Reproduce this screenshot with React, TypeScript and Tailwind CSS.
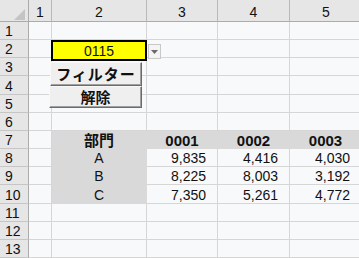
import React from "react";

type Cell = { text?: string; gray?: boolean; bold?: boolean; right?: boolean };

const data = [
  ["9,835", "4,416", "4,030"],
  ["8,225", "8,003", "3,192"],
  ["7,350", "5,261", "4,772"],
];

function cellAt(r: number, c: number): Cell {
  if (r === 7 && c >= 2) {
    return { text: ["部門", "0001", "0002", "0003"][c - 2], gray: true, bold: true };
  }
  if (r >= 8 && r <= 10) {
    if (c === 2) return { text: ["A", "B", "C"][r - 8], gray: true };
    if (c >= 3) return { text: data[r - 8][c - 3], right: true };
  }
  return {};
}

const rows = [1, 2, 3, 4, 5, 6, 7, 8, 9, 10, 11, 12, 13];
const cols = [1, 2, 3, 4, 5];

function GridCell({ r, c }: { r: number; c: number }) {
  const cell = cellAt(r, c);
  return (
    <div
      className={clsx(
        "flex items-center text-[14px] leading-none pt-[1px] border-r border-b",
        cell.gray ? "bg-[#d9d9d9] border-[#d9d9d9]" : "border-[#d6d6d6]",
        cell.right ? "justify-end pr-[11px]" : "justify-center",
        cell.bold && "font-bold text-[15px]"
      )}
    >
      {cell.text}
    </div>
  );
}

function clsx(...a: (string | false | undefined)[]) {
  return a.filter(Boolean).join(" ");
}

function Button({ label, extra }: { label: string; extra: string }) {
  return (
    <div
      className={clsx(
        "absolute flex items-center justify-center bg-[#efefef] border border-[#f8f8f8] border-r-[#6b6b6b] border-b-[#6b6b6b] text-[15px] font-bold font-['Noto_Sans_CJK_JP',sans-serif] shadow-[inset_-1px_-1px_0_#a0a0a0]",
        extra
      )}
    >
      {label}
    </div>
  );
}

export default function App() {
  return (
    <div className="relative w-[359px] h-[258px] overflow-hidden bg-[#f8f9fb] text-[#111] font-['Liberation_Sans','Noto_Sans_CJK_JP',sans-serif]">
      <div className="grid w-[362px] grid-cols-[29px_23px_95px_71px_72px_72px] grid-rows-[22px_18px_18px_18px_19px_18px_18px_18px_18px_18px_19px_18px_18px_18px]">
        <div className="relative bg-[#e6e6e6] border-r border-b border-[#ababab]">
          <svg className="absolute left-[14px] top-[9px]" width="11" height="11" viewBox="0 0 11 11">
            <polygon points="11,0 11,11 0,11" fill="#c4c4c4" />
          </svg>
        </div>
        {cols.map((c) => (
          <div
            key={"h" + c}
            className={clsx(
              "flex items-center justify-center bg-[#e6e6e6] border-b border-b-[#ababab] text-[14px] leading-none pt-[3px]",
              c < 5 && "border-r border-r-[#b8b8b8]"
            )}
          >
            {c}
          </div>
        ))}
        {rows.map((r) => (
          <React.Fragment key={"r" + r}>
            <div className="flex items-center justify-start pl-[5px] bg-[#e6e6e6] border-r border-r-[#ababab] border-b border-b-[#c6c6c6] text-[14px] leading-none pt-[1px]">
              {r}
            </div>
            {cols.map((c) => (
              <GridCell key={c} r={r} c={c} />
            ))}
          </React.Fragment>
        ))}
      </div>

      <div className="absolute left-[51px] top-[40px] w-[96px] h-[21px] bg-[#ffff00] border-2 border-black flex items-center justify-center text-[14px] leading-none pt-[1px]">
        0115
      </div>
      <div className="absolute left-[148px] top-[44px] w-[13px] h-[15px] bg-[#f4f4f4] border border-[#c8c8c8] flex items-center justify-center">
        <svg width="7" height="4" viewBox="0 0 7 4">
          <polygon points="0,0 7,0 3.5,4" fill="#6a6a6a" />
        </svg>
      </div>

      <Button label="フィルター" extra="left-[50px] top-[62px] w-[92px] h-[24px] tracking-[1px]" />
      <Button label="解除" extra="left-[49px] top-[86px] w-[93px] h-[22px]" />
    </div>
  );
}
